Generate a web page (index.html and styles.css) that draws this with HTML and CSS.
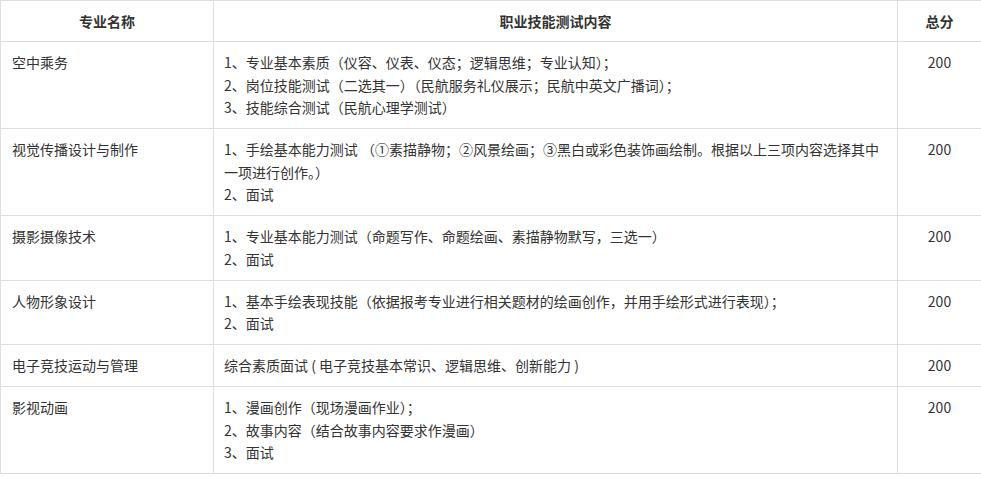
FILE: index.html
```html
<!DOCTYPE html>
<html lang="zh-CN">
<head>
  <meta charset="UTF-8" />
  <meta name="viewport" content="width=device-width, initial-scale=1.0"/>
  <title>职业技能测试内容</title>
  <link rel="stylesheet" href="styles.css">
</head>
<body>
  <table class="exam-table">
    <colgroup>
      <col class="col-name">
      <col class="col-content">
      <col class="col-score">
    </colgroup>
    <thead>
      <tr>
        <th>专业名称</th>
        <th>职业技能测试内容</th>
        <th>总分</th>
      </tr>
    </thead>
    <tbody>
      <tr>
        <td>空中乘务</td>
        <td>
          1、专业基本素质（仪容、仪表、仪态；逻辑思维；专业认知）；<br>
          2、岗位技能测试（二选其一）（民航服务礼仪展示；民航中英文广播词）；<br>
          3、技能综合测试（民航心理学测试）
        </td>
        <td class="score">200</td>
      </tr>
      <tr>
        <td>视觉传播设计与制作</td>
        <td>
          1、手绘基本能力测试 （①素描静物；②风景绘画；③黑白或彩色装饰画绘制。根据以上三项内容选择其中一项进行创作。）<br>
          2、面试
        </td>
        <td class="score">200</td>
      </tr>
      <tr>
        <td>摄影摄像技术</td>
        <td>
          1、专业基本能力测试（命题写作、命题绘画、素描静物默写，三选一）<br>
          2、面试
        </td>
        <td class="score">200</td>
      </tr>
      <tr>
        <td>人物形象设计</td>
        <td>
          1、基本手绘表现技能（依据报考专业进行相关题材的绘画创作，并用手绘形式进行表现）；<br>
          2、面试
        </td>
        <td class="score">200</td>
      </tr>
      <tr>
        <td>电子竞技运动与管理</td>
        <td>综合素质面试 ( 电子竞技基本常识、逻辑思维、创新能力 )</td>
        <td class="score">200</td>
      </tr>
      <tr>
        <td>影视动画</td>
        <td>
          1、漫画创作（现场漫画作业）；<br>
          2、故事内容（结合故事内容要求作漫画）<br>
          3、面试
        </td>
        <td class="score">200</td>
      </tr>
    </tbody>
  </table>
</body>
</html>
```

FILE: styles.css
```css
body {
  margin: 0;
  background: #fff;
  color: #333;
  font-family: "Noto Sans CJK SC", "Noto Sans", sans-serif;
  font-size: 14px;
}

.exam-table {
  width: 981px;
  border-collapse: collapse;
  table-layout: fixed;
}

.col-name {
  width: 213px;
}

.col-content {
  width: 684px;
}

.col-score {
  width: 84px;
}

th,
td {
  border: 1px solid #ddd;
  padding: 9px 10px 9.5px;
  line-height: 22.5px;
  vertical-align: top;
  text-align: left;
}

th {
  padding: 8.5px 10px 9px;
  text-align: center;
  vertical-align: middle;
  font-weight: bold;
  color: #333;
}

td:first-child {
  padding-left: 11px;
}

.score {
  text-align: center;
}
```
